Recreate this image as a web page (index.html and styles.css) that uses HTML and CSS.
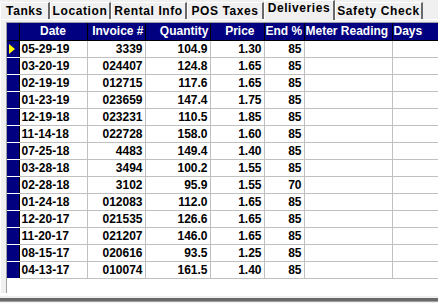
FILE: index.html
```html
<!DOCTYPE html>
<html lang="en">
<head>
  <meta charset="UTF-8" />
  <title>Deliveries</title>
  <link rel="stylesheet" href="styles.css">
</head>
<body>

  <!-- tab strip -->
  <div class="tabs">
    <span class="tab t-tanks">Tanks</span>
    <span class="tab t-location">Location</span>
    <span class="tab t-rental">Rental Info</span>
    <span class="tab t-pos">POS Taxes</span>
    <span class="tab t-deliv active">Deliveries</span>
    <span class="tab t-safety">Safety Check</span>
  </div>

  <div class="page">
    <div class="grid">
      <table>
        <colgroup>
          <col class="c-ind"><col class="c-date"><col class="c-inv"><col class="c-qty">
          <col class="c-price"><col class="c-end"><col class="c-meter"><col class="c-days">
        </colgroup>
        <thead>
          <tr>
            <th class="ind"></th>
            <th class="center">Date</th>
            <th class="right">Invoice #</th>
            <th class="right">Quantity</th>
            <th class="right pad">Price</th>
            <th>End %</th>
            <th>Meter Reading</th>
            <th>Days</th>
          </tr>
        </thead>
        <tbody>
          <tr><td class="ind"><span class="arrow"></span></td><td>05-29-19</td><td class="right">3339</td><td class="right">104.9</td><td class="right">1.30</td><td class="right">85</td><td></td><td></td></tr>
          <tr><td class="ind"></td><td>03-20-19</td><td class="right">024407</td><td class="right">124.8</td><td class="right">1.65</td><td class="right">85</td><td></td><td></td></tr>
          <tr><td class="ind"></td><td>02-19-19</td><td class="right">012715</td><td class="right">117.6</td><td class="right">1.65</td><td class="right">85</td><td></td><td></td></tr>
          <tr><td class="ind"></td><td>01-23-19</td><td class="right">023659</td><td class="right">147.4</td><td class="right">1.75</td><td class="right">85</td><td></td><td></td></tr>
          <tr><td class="ind"></td><td>12-19-18</td><td class="right">023231</td><td class="right">110.5</td><td class="right">1.85</td><td class="right">85</td><td></td><td></td></tr>
          <tr><td class="ind"></td><td>11-14-18</td><td class="right">022728</td><td class="right">158.0</td><td class="right">1.60</td><td class="right">85</td><td></td><td></td></tr>
          <tr><td class="ind"></td><td>07-25-18</td><td class="right">4483</td><td class="right">149.4</td><td class="right">1.40</td><td class="right">85</td><td></td><td></td></tr>
          <tr><td class="ind"></td><td>03-28-18</td><td class="right">3494</td><td class="right">100.2</td><td class="right">1.55</td><td class="right">85</td><td></td><td></td></tr>
          <tr><td class="ind"></td><td>02-28-18</td><td class="right">3102</td><td class="right">95.9</td><td class="right">1.55</td><td class="right">70</td><td></td><td></td></tr>
          <tr><td class="ind"></td><td>01-24-18</td><td class="right">012083</td><td class="right">112.0</td><td class="right">1.65</td><td class="right">85</td><td></td><td></td></tr>
          <tr><td class="ind"></td><td>12-20-17</td><td class="right">021535</td><td class="right">126.6</td><td class="right">1.65</td><td class="right">85</td><td></td><td></td></tr>
          <tr><td class="ind"></td><td>11-20-17</td><td class="right">021207</td><td class="right">146.0</td><td class="right">1.65</td><td class="right">85</td><td></td><td></td></tr>
          <tr><td class="ind"></td><td>08-15-17</td><td class="right">020616</td><td class="right">93.5</td><td class="right">1.25</td><td class="right">85</td><td></td><td></td></tr>
          <tr><td class="ind"></td><td>04-13-17</td><td class="right">010074</td><td class="right">161.5</td><td class="right">1.40</td><td class="right">85</td><td></td><td></td></tr>
        </tbody>
      </table>
    </div>
  </div>

  <div class="footer"></div>

</body>
</html>
```

FILE: styles.css
```css
:root {
  --face: #f0f0f0;
  --navy: #000080;
  --shadow: #a0a0a0;
  --dark: #696969;
  --line: #c0c0c0;
}

* {
  margin: 0;
  padding: 0;
  box-sizing: border-box;
}

body {
  width: 438px;
  height: 303px;
  overflow: hidden;
  background: var(--face);
  font-family: "Liberation Sans", Arial, sans-serif;
  font-size: 12px;
  font-weight: bold;
  color: #000;
}

/* tab strip */
.tabs {
  display: flex;
  align-items: flex-end;
  height: 19px;
}

.tab {
  height: 17px;
  line-height: 16px;
  text-align: center;
  white-space: nowrap;
  border-left: 1px solid #fff;
  border-top: 1px solid #fff;
  border-right: 2px solid var(--dark);
  letter-spacing: 0.6px;
}

.t-tanks { width: 50px; }
.t-location { width: 61px; }
.t-rental { width: 76px; }
.t-pos { width: 77px; }
.t-deliv { width: 71px; }
.t-safety { width: 88px; }

.tab.active {
  height: 20px;
  line-height: 15px;
  margin-bottom: -1px;
  position: relative;
  z-index: 1;
  background: var(--face);
}

/* tab page */
.page {
  border-top: 1px solid #fff;
  border-left: 1px solid #fff;
  padding: 2px 0 0 5px;
  height: 274px;
}

.grid {
  height: 271px;
  background: #fff;
  border-top: 1px solid var(--shadow);
  border-left: 1px solid var(--shadow);
  overflow: hidden;
}

table {
  border-collapse: collapse;
  table-layout: fixed;
  width: 431px;
}

.c-ind { width: 12px; }
.c-date { width: 68px; }
.c-inv { width: 58px; }
.c-qty { width: 65px; }
.c-price { width: 54px; }
.c-end { width: 40px; }
.c-meter { width: 88px; }
.c-days { width: 46px; }

th, td {
  height: 17px;
  padding: 0 2px;
  white-space: nowrap;
  overflow: hidden;
  text-align: left;
}

th {
  padding: 0 1px;
  background: var(--navy);
  color: #fff;
  border-right: 1px solid #000;
  border-bottom: 1px solid #000;
  font-weight: bold;
}

td {
  border-right: 1px solid var(--line);
  border-bottom: 1px solid var(--line);
}

.right { text-align: right; }
.center { text-align: center; }
th.pad { padding-right: 9px; }

td.ind {
  background: var(--navy);
  border-right: 1px solid #000;
  border-bottom: 1px solid #fff;
  position: relative;
}

.arrow {
  position: absolute;
  left: 2px;
  top: 3px;
  width: 0;
  height: 0;
  border-top: 5px solid transparent;
  border-bottom: 5px solid transparent;
  border-left: 6px solid #ffff00;
}

/* bottom edge of the form */
.footer {
  height: 9px;
  border-top: 3px solid #fff;
  border-bottom: 1px solid var(--shadow);
  box-shadow: inset 0 -3px 0 var(--dark);
}
```
